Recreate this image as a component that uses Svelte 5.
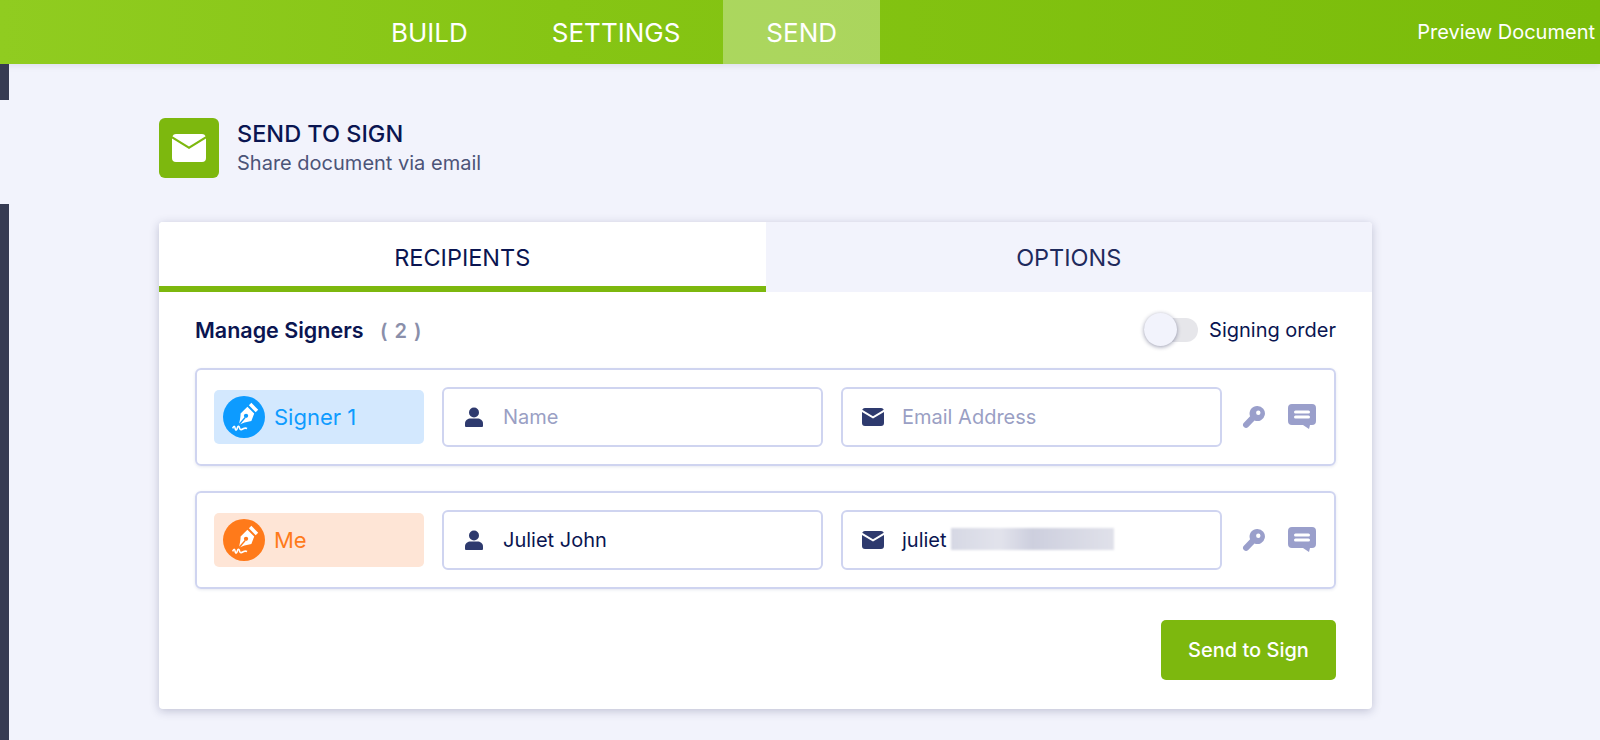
<script>
	const signers = [
		{ label: 'Signer 1', tone: 'blue', name: '', email: '' },
		{ label: 'Me', tone: 'orange', name: 'Juliet John', email: 'juliet' },
	];
	const navItems = [
		{ label: 'BUILD', cls: 'build' },
		{ label: 'SETTINGS', cls: 'settings' },
		{ label: 'SEND', cls: 'send' },
	];
</script>

<div class="page">
	<header class="topbar">
		<nav class="nav">
			{#each navItems as item}
				<div class="nav-item {item.cls}">{item.label}</div>
			{/each}
		</nav>
		<div class="preview">Preview Document</div>
	</header>

	<div class="side">
		<span class="side-a"></span>
		<span class="side-b"></span>
	</div>

	<main class="content">
		<div class="heading">
			<div class="heading-icon">
				<svg width="34" height="28" viewBox="0 0 34 28">
					<path d="M4 0h26a4 4 0 0 1 3.600 2.200L17 12.500 .4 2.200A4 4 0 0 1 4 0z" fill="#fff" />
					<path d="M0 4.600l17 10.400 17-10.400V24a4 4 0 0 1-4 4H4a4 4 0 0 1-4-4z" fill="#fff" />
				</svg>
			</div>
			<div>
				<div class="heading-title">SEND TO SIGN</div>
				<div class="heading-sub">Share document via email</div>
			</div>
		</div>

		<section class="card">
			<div class="tabs">
				<div class="tab active">RECIPIENTS</div>
				<div class="tab">OPTIONS</div>
			</div>
			<div class="body">
				<div class="manage">
					<div class="manage-left">
						<span class="manage-title">Manage Signers</span>
						<span class="count">( 2 )</span>
					</div>
					<div class="order">
						<span class="switch"><span class="knob"></span></span>
						<span>Signing order</span>
					</div>
				</div>

				{#each signers as s}
					<div class="row">
						<div class="badge {s.tone}">
							<span class="pen">
								<svg width="34" height="34" viewBox="0 0 30 30">
									<path d="M21.500 2.500l6 6-2.200 2.200-6-6z" fill="#fff" />
									<path d="M18 6l6 6-2.500 6.500Q15 19.500 10.500 21.800 12 15.500 12 12z" fill="#fff" />
									<path d="M10.500 21.800L16 15.500" stroke="currentColor" stroke-width="1.200" />
									<circle cx="16.800" cy="14" r="1.900" fill="currentColor" />
									<path d="M5 25c1-2.500 1.800-2.500 2.200 0s1.500 1.500 2-.5 1.500-1.500 2 .5 2 1 3.500 .2 2-.5 3 0" fill="none" stroke="#fff" stroke-width="1.400" />
								</svg>
							</span>
							<span>{s.label}</span>
						</div>
						<div class="field">
							<svg class="field-icon person" width="18" height="20" viewBox="0 0 18 20">
								<circle cx="9" cy="5.500" r="5" fill="#2e3a6e" />
								<path d="M0 19v-2.500C0 13 3 11.500 5.500 11.500h7c2.500 0 5.500 1.500 5.500 5V19a1 1 0 0 1-1 1H1a1 1 0 0 1-1-1z" fill="#2e3a6e" />
							</svg>
							{#if s.name}
								<span class="value">{s.name}</span>
							{:else}
								<span class="placeholder">Name</span>
							{/if}
						</div>
						<div class="field">
							<svg class="field-icon" width="22" height="18" viewBox="0 0 22 18">
								<path d="M3 0h16a3 3 0 0 1 2.800 1.800L11 8.300 .2 1.800A3 3 0 0 1 3 0z" fill="#2e3a6e" />
								<path d="M0 4l11 6.600L22 4v11a3 3 0 0 1-3 3H3a3 3 0 0 1-3-3z" fill="#2e3a6e" />
							</svg>
							{#if s.email}
								<span class="value">{s.email}</span>
								<span class="blur"></span>
							{:else}
								<span class="placeholder">Email Address</span>
							{/if}
						</div>
						<div class="actions">
							<svg width="24" height="24" viewBox="0 0 24 24">
								<path fill-rule="evenodd" d="M15.500 1a7.500 7.500 0 1 1-3 14.400L6.200 22a3 3 0 0 1-4.300-4.200l6.200-6.500A7.500 7.500 0 0 1 15.500 1zm.8 4.500a2.200 2.200 0 1 0 0 4.400 2.200 2.200 0 0 0 0-4.400z" fill="#9a9fcb" />
							</svg>
							<svg width="28" height="26" viewBox="0 0 28 26">
								<path fill-rule="evenodd" d="M4 0h20a4 4 0 0 1 4 4v13a4 4 0 0 1-4 4h-2l-1 4-6-4H4a4 4 0 0 1-4-4V4a4 4 0 0 1 4-4zm3.500 6.500a1.500 1.500 0 0 0 0 3h13a1.500 1.500 0 0 0 0-3zm0 5a1.500 1.500 0 0 0 0 3h13a1.500 1.500 0 0 0 0-3z" fill="#9a9fcb" />
							</svg>
						</div>
					</div>
				{/each}

				<div class="footer">
					<button class="send-btn">Send to Sign</button>
				</div>
			</div>
		</section>
	</main>
</div>

<style>
	:global(body) {
		background: #f2f3fc;
		font-family: "Inter", "Liberation Sans", sans-serif;
	}

	.page {
		position: relative;
		height: 740px;
		overflow: hidden;
		background: #f2f3fc;
	}

	.topbar {
		display: flex;
		align-items: stretch;
		justify-content: space-between;
		height: 64px;
		background: linear-gradient(90deg, #90cc20 0%, #86c514 35%, #7abc0a 100%);
		box-shadow: 0 2px 6px rgba(40, 50, 90, 0.1);
		color: #fff;
	}

	.nav {
		display: flex;
		padding-left: 391px;
	}

	.nav-item {
		display: flex;
		align-items: center;
		font-size: 26px;
		font-weight: 400;
	}

	.build { margin-right: 84px; }
	.settings { margin-right: 43px; }
	.send {
		padding: 0 43px;
		background: rgba(255, 255, 255, 0.32);
	}

	.preview {
		display: flex;
		align-items: center;
		padding-right: 5px;
		font-size: 20px;
	}

	.side {
		position: absolute;
		top: 64px;
		left: 0;
		width: 9px;
		height: 676px;
	}
	.side-a, .side-b {
		display: block;
		background: #363b52;
	}
	.side-a { height: 36px; margin-bottom: 104px; }
	.side-b { height: 536px; }

	.content {
		padding: 54px 228px 0 159px;
	}

	.heading {
		display: flex;
		align-items: center;
		gap: 18px;
		height: 60px;
	}

	.heading-icon {
		display: flex;
		align-items: center;
		justify-content: center;
		width: 60px;
		height: 60px;
		border-radius: 6px;
		background: #7db80e;
	}

	.heading-title {
		font-size: 23.500px;
		font-weight: 500;
		line-height: 30px;
		color: #0a1551;
	}

	.heading-sub {
		font-size: 20px;
		line-height: 28px;
		color: #4c5478;
	}

	.card {
		margin-top: 44px;
		background: #fff;
		border-radius: 4px;
		box-shadow: 0 2px 10px rgba(40, 45, 90, 0.25);
		overflow: hidden;
	}

	.tabs {
		display: flex;
		height: 70px;
	}

	.tab {
		display: flex;
		flex: 1;
		align-items: center;
		justify-content: center;
		font-size: 23.500px;
		color: #1f2a5c;
		background: #f2f3fc;
	}

	.tab.active {
		background: #fff;
		border-bottom: 6px solid #7db80e;
		box-sizing: border-box;
		color: #0a1551;
		padding-top: 6px;
	}

	.body {
		padding: 0 36px 29px;
	}

	.manage {
		display: flex;
		align-items: center;
		justify-content: space-between;
		height: 76px;
	}

	.manage-title {
		font-size: 21.500px;
		font-weight: 600;
		color: #0a1551;
	}

	.count {
		margin-left: 12px;
		font-size: 20px;
		font-weight: 600;
		letter-spacing: 1px;
		color: #8a8faa;
	}

	.order {
		display: flex;
		align-items: center;
		gap: 11px;
		font-size: 20px;
		color: #0a1551;
	}

	.switch {
		position: relative;
		display: block;
		width: 54px;
		height: 24px;
		border-radius: 12px;
		background: #e6e6ea;
	}

	.knob {
		position: absolute;
		top: -5px;
		left: 0;
		width: 33px;
		height: 33px;
		border-radius: 50%;
		background: #f2f3fc;
		box-shadow: 0 1px 4px rgba(30, 35, 80, 0.45);
	}

	.row {
		display: flex;
		align-items: center;
		gap: 18px;
		height: 98px;
		box-sizing: border-box;
		margin-bottom: 25px;
		padding: 0 18px 0 17px;
		border: 2px solid #cfd4f0;
		border-radius: 6px;
		box-shadow: 0 1px 3px rgba(60, 70, 130, 0.12);
	}

	.badge {
		display: flex;
		flex: none;
		align-items: center;
		gap: 9px;
		width: 210px;
		height: 54px;
		box-sizing: border-box;
		padding-left: 9px;
		border-radius: 5px;
		font-size: 22px;
	}

	.badge.blue { background: #d3e8fe; color: #0d9bff; }
	.badge.orange { background: #fee5d6; color: #ff7a1a; }

	.pen {
		display: flex;
		align-items: center;
		justify-content: center;
		width: 42px;
		height: 42px;
		border-radius: 50%;
	}
	.blue .pen { background: #0d9bff; }
	.orange .pen { background: #ff7a1a; }

	.field {
		position: relative;
		display: flex;
		align-items: center;
		flex: 1;
		height: 60px;
		box-sizing: border-box;
		padding-left: 19px;
		border: 2px solid #cfd4f0;
		border-radius: 6px;
		font-size: 20px;
	}

	.field-icon {
		width: 22px;
		margin-right: 18px;
	}

	.placeholder { color: #9a9fc4; }
	.value { color: #0a1551; }

	.blur {
		position: absolute;
		top: 16px;
		left: 108px;
		width: 163px;
		height: 22px;
		background: linear-gradient(90deg, #d6d8e4, #e2e3ec 30%, #cdcfde 50%, #e0e1ea);
		filter: blur(1px);
	}

	.actions {
		display: flex;
		flex: none;
		align-items: center;
		gap: 22px;
		margin-left: 2px;
	}

	.footer {
		display: flex;
		justify-content: flex-end;
		margin-top: 31px;
	}

	.send-btn {
		width: 175px;
		height: 60px;
		border: 0;
		border-radius: 5px;
		background: #7db80e;
		color: #fff;
		font-family: inherit;
		font-size: 20px;
		font-weight: 500;
	}
</style>
